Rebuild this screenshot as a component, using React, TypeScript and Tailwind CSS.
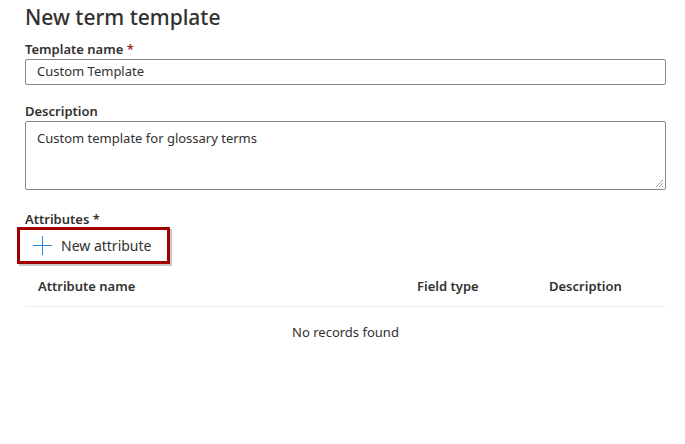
export default function App() {
  return (
    <div
      className="w-[685px] h-[444px] bg-white text-[#323130] overflow-hidden"
      style={{ fontFamily: '"Segoe UI", "Noto Sans", sans-serif' }}
    >
      <div className="px-[25px] pt-[3px]">
        <h1 className="text-[21px] leading-[28px] font-medium text-[#323130]">New term template</h1>

        {/* Template name */}
        <div className="mt-[8px]">
          <label className="block text-[13px] leading-[20px] font-semibold">
            Template name <span className="text-[#a4262c]">*</span>
          </label>
          <div className="w-[641px] h-[26px] border border-[#8a8886] rounded-[2px] flex items-center px-[11px] text-[13px]">
            Custom Template
          </div>
        </div>

        {/* Description */}
        <div className="mt-[16px]">
          <label className="block text-[13px] leading-[20px] font-semibold">Description</label>
          <div className="relative w-[641px] h-[69px] border border-[#8a8886] rounded-[2px] px-[11px] pt-[7px] text-[13px]">
            Custom template for glossary terms
            <svg className="absolute right-[1px] bottom-[1px]" width="10" height="10" viewBox="0 0 10 10">
              <path d="M9 2 L2 9 M9 5 L5 9 M9 8 L8 9" stroke="#a0a0a0" strokeWidth="1" />
            </svg>
          </div>
        </div>

        {/* Attributes */}
        <div className="mt-[19px]">
          <label className="block text-[13px] leading-[20px] font-semibold">
            Attributes <span>*</span>
          </label>
          <div className="-ml-[8px] -mt-[2px] w-[153px] h-[37px] border-[3px] border-[#a00000] shadow-[2px_2px_0_#c8c8c8] flex items-center pl-[13px] gap-[9px] text-[14px]">
            <svg width="19" height="19" viewBox="0 0 19 19">
              <path d="M9.5 0 V19 M0 9.5 H19" stroke="#2b88d8" strokeWidth="1" />
            </svg>
            <span>New attribute</span>
          </div>
        </div>

        {/* Table */}
        <div className="w-[641px] mt-[3px]">
          <div className="flex items-center h-[40px] border-b border-[#edebe9] text-[13px] font-semibold">
            <div className="w-[392px] pl-[13px]">Attribute name</div>
            <div className="w-[132px]">Field type</div>
            <div>Description</div>
          </div>
          <div className="text-center text-[13px] pt-[16px]">No records found</div>
        </div>
      </div>
    </div>
  );
}
